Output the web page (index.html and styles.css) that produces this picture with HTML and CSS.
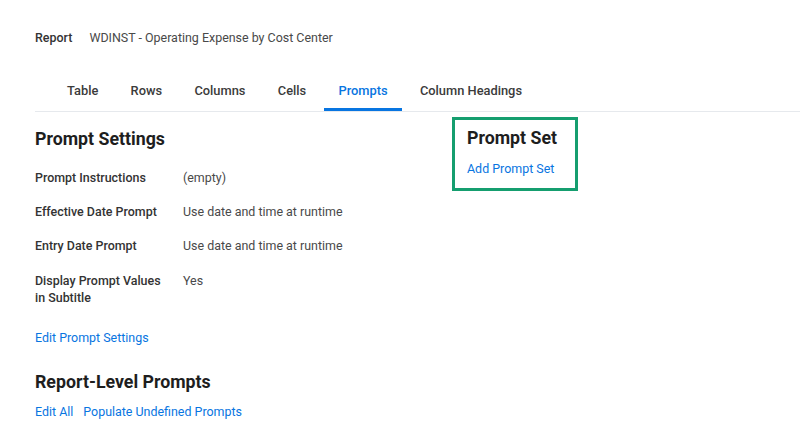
FILE: index.html
```
<!DOCTYPE html>
<html lang="en">
<head>
<meta charset="utf-8">
<title>Report Prompts</title>
<link rel="stylesheet" href="styles.css">
</head>
<body>
<div class="page">
  <div class="report-line">
    <span class="report-label">Report</span>
    <span class="report-name">WDINST - Operating Expense by Cost Center</span>
  </div>
  <nav class="tabs">
    <span class="tab">Table</span>
    <span class="tab">Rows</span>
    <span class="tab">Columns</span>
    <span class="tab">Cells</span>
    <span class="tab active">Prompts</span>
    <span class="tab">Column Headings</span>
  </nav>
  <div class="content">
    <section class="left">
      <h2 class="heading">Prompt Settings</h2>
      <div class="fields">
        <div class="label">Prompt Instructions</div>
        <div class="value">(empty)</div>
        <div class="label">Effective Date Prompt</div>
        <div class="value">Use date and time at runtime</div>
        <div class="label">Entry Date Prompt</div>
        <div class="value">Use date and time at runtime</div>
        <div class="label last">Display Prompt Values in Subtitle</div>
        <div class="value last">Yes</div>
      </div>
      <a class="link edit-settings" href="#">Edit Prompt Settings</a>
      <h2 class="heading level">Report-Level Prompts</h2>
      <div class="link-row">
        <a class="link" href="#">Edit All</a>
        <a class="link" href="#">Populate Undefined Prompts</a>
      </div>
    </section>
    <section class="right">
      <div class="prompt-set">
        <h2 class="heading">Prompt Set</h2>
        <a class="link" href="#">Add Prompt Set</a>
      </div>
    </section>
  </div>
</div>
</body>
</html>
```
FILE: styles.css
```
* { box-sizing: border-box; }
html, body { margin: 0; padding: 0; background: #ffffff; }
body {
  font-family: Roboto, "Liberation Sans", Arial, sans-serif;
  font-size: 12.45px;
  line-height: 17px;
  color: #333333;
}
.page { padding: 30px 0 0 35px; }
.report-line { display: flex; gap: 17px; line-height: 16px; }
.report-label { font-weight: 500; color: #333333; }
.report-name { color: #494949; }
.tabs {
  display: flex;
  margin-top: 26px;
  padding-left: 18px;
  gap: 4.3px;
  border-bottom: 1px solid #e6e9ed;
}
.tab {
  padding: 11px 14px 9px;
  font-size: 12.85px;
  line-height: 16px;
  font-weight: 500;
  color: #3b3b3b;
  border-bottom: 3px solid transparent;
}
.tab.active { color: #0875e1; border-bottom-color: #0875e1; }
.content {
  display: grid;
  grid-template-columns: 417px auto;
  align-items: start;
}
.heading {
  margin: 0;
  font-size: 17.75px;
  line-height: 24px;
  font-weight: 700;
  color: #1e1e1e;
}
.left { padding-top: 15px; }
.fields {
  display: grid;
  grid-template-columns: 148px auto;
  row-gap: 17px;
  margin-top: 18px;
}
.label { font-weight: 500; color: #333333; width: 134px; }
.label.last, .value.last { margin-top: 1px; }
.value { color: #494949; }
.link { color: #0875e1; text-decoration: none; }
.edit-settings { display: block; margin-top: 23px; }
.heading.level { margin-top: 24px; }
.link-row { display: flex; gap: 10px; margin-top: 9px; }
.right { padding-top: 5px; }
.prompt-set {
  width: 126px;
  border: 3px solid #159e6f;
  padding: 6px 12px 11px;
}
.prompt-set .link { display: block; margin-top: 10px; }
```
